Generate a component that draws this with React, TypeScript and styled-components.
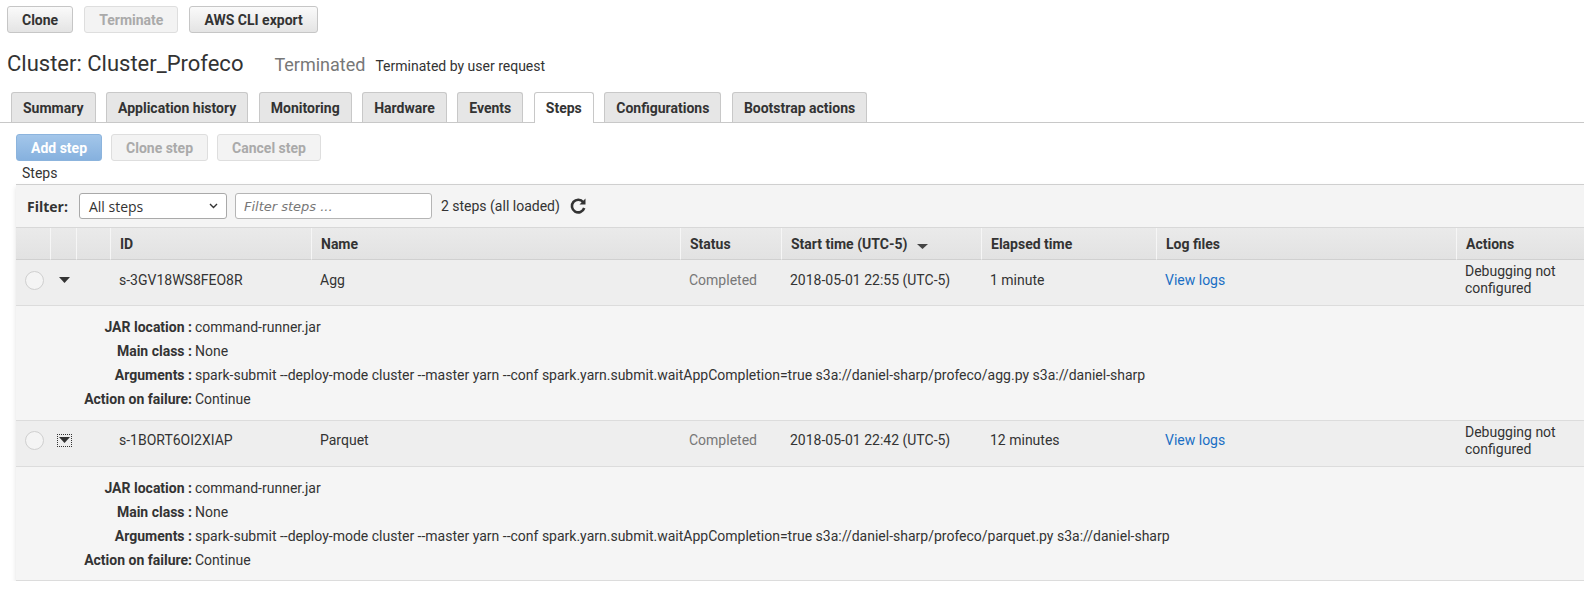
import React from "react";
import styled, { createGlobalStyle, css } from "styled-components";

const GlobalStyle = createGlobalStyle`
  body {
    margin: 0;
    background: #fff;
    font-family: Roboto, "Liberation Sans", Arial, sans-serif;
    font-size: 14px;
    color: #333;
  }
`;

const Page = styled.div`
  padding: 6px 0 0 0;
  width: 1584px;
  overflow: hidden;
`;

const Toolbar = styled.div`
  display: flex;
  gap: 11px;
  padding-left: 7px;
`;

const Btn = styled.button<{ $disabled?: boolean; $primary?: boolean }>`
  height: 27px;
  padding: 0 14px;
  border: 1px solid #c6c6c6;
  border-radius: 3px;
  background: linear-gradient(#fafafa, #e4e4e4);
  font-family: Roboto, "Liberation Sans", sans-serif;
  font-weight: bold;
  font-size: 14px;
  color: #333;
  ${(p) =>
    p.$disabled &&
    css`
      color: #aaa;
      border-color: #dedede;
      background: #f3f3f3;
    `}
  ${(p) =>
    p.$primary &&
    css`
      color: #fff;
      border-color: #8cb4dd;
      background: linear-gradient(#a3c6ea, #86b1de);
    `}
`;

const TitleRow = styled.div`
  display: flex;
  align-items: baseline;
  padding: 18px 0 0 7px;
  height: 33px;
`;

const Title = styled.h1`
  margin: 0;
  font-size: 22px;
  font-weight: normal;
  color: #333;
`;

const StateText = styled.span`
  font-size: 18px;
  color: #777;
  margin-left: 31px;
`;

const StateReason = styled.span`
  font-size: 14px;
  color: #333;
  margin-left: 10px;
`;

const Tabs = styled.div`
  display: flex;
  gap: 10.5px;
  padding-left: 11px;
  margin-top: 8px;
  border-bottom: 1px solid #c8c8c8;
`;

const Tab = styled.div<{ $active?: boolean }>`
  padding: 0 11px;
  display: flex;
  align-items: center;
  border: 1px solid #c8c8c8;
  border-bottom: none;
  border-radius: 3px 3px 0 0;
  background: ${(p) => (p.$active ? "#fff" : "#e6e6e6")};
  font-weight: bold;
  font-size: 14px;
  color: #333;
  margin-bottom: ${(p) => (p.$active ? "-1px" : "0")};
  height: ${(p) => (p.$active ? "30px" : "29px")};
`;

const StepActions = styled(Toolbar)`
  padding-left: 16px;
  margin-top: 11px;
  gap: 9px;
`;

const SectionLabel = styled.div`
  padding: 4px 0 0 22px;
  font-size: 14px;
  color: #333;
  height: 19px;
`;

const Panel = styled.div`
  margin-left: 16px;
  border-top: 1px solid #cfcfcf;
  box-shadow: 0 3px 5px rgba(0, 0, 0, 0.12);
`;

const FilterBar = styled.div`
  display: flex;
  align-items: center;
  height: 42px;
  padding-left: 11px;
  background: #f4f4f4;
  border-bottom: 1px solid #d8d8d8;
  font-family: "Open Sans", Roboto, sans-serif;
`;

const FilterLabel = styled.span`
  font-weight: bold;
  margin-right: 11px;
  font-size: 14px;
`;

const Select = styled.div`
  width: 148px;
  height: 26px;
  box-sizing: border-box;
  border: 1px solid #a9a9a9;
  border-radius: 3px;
  background: #fff;
  display: flex;
  align-items: center;
  justify-content: space-between;
  padding: 0 8px 0 9px;
  font-size: 14px;
  color: #333;
`;

const FilterInput = styled.div`
  width: 197px;
  height: 26px;
  box-sizing: border-box;
  border: 1px solid #b5b5b5;
  border-radius: 3px;
  background: #fff;
  margin-left: 8px;
  display: flex;
  align-items: center;
  padding-left: 8px;
  font-style: italic;
  color: #777;
  font-family: "DejaVu Sans", sans-serif;
  font-size: 13px;
`;

const Count = styled.span`
  margin-left: 9px;
  color: #333;
  font-family: Roboto, sans-serif;
  font-size: 14px;
`;

const Refresh = styled.span`
  margin-left: 9px;
  display: inline-flex;
`;

const Grid = styled.div`
  display: grid;
  grid-template-columns: 34px 26px 34px 201px 369px 101px 200px 175px 300px 1fr;
`;

const HeadCell = styled.div`
  height: 31px;
  display: flex;
  align-items: center;
  padding-left: 9px;
  background: linear-gradient(#eaeaea, #e2e2e2);
  border-left: 1px solid #f6f6f6;
  border-bottom: 1px solid #d0d0d0;
  font-weight: bold;
  color: #333;
  &:first-child {
    border-left: none;
  }
`;

const Cell = styled.div<{ $muted?: boolean; $link?: boolean }>`
  box-sizing: border-box;
  height: 46px;
  display: flex;
  align-items: center;
  padding: 0 0 5px 9px;
  background: #eeeeee;
  border-bottom: 1px solid #dcdcdc;
  color: ${(p) => (p.$muted ? "#777" : p.$link ? "#1a6fc4" : "#333")};
  line-height: 17px;
`;

const Detail = styled.div`
  grid-column: 1 / -1;
  background: #f5f5f5;
  border-bottom: 1px solid #dcdcdc;
  padding: 13px 0 11px 0;
  display: grid;
  grid-template-columns: 176px 1fr;
  row-gap: 6.5px;
  column-gap: 3px;
  line-height: 17.5px;
`;

const DLabel = styled.div`
  text-align: right;
  font-weight: bold;
`;

const Radio = styled.span`
  width: 17px;
  height: 17px;
  border: 1px solid #cfcfcf;
  border-radius: 50%;
  background: #f4f4f4;
`;

const Caret = styled.span<{ $focus?: boolean }>`
  display: inline-flex;
  padding: 2px 1px;
  outline: ${(p) => (p.$focus ? "1px dotted #333" : "none")};
  margin-left: -1px;
`;

const tabs = [
  "Summary",
  "Application history",
  "Monitoring",
  "Hardware",
  "Events",
  "Steps",
  "Configurations",
  "Bootstrap actions",
];

const steps = [
  {
    id: "s-3GV18WS8FEO8R",
    name: "Agg",
    start: "2018-05-01 22:55 (UTC-5)",
    elapsed: "1 minute",
    script: "agg.py",
  },
  {
    id: "s-1BORT6OI2XIAP",
    name: "Parquet",
    start: "2018-05-01 22:42 (UTC-5)",
    elapsed: "12 minutes",
    script: "parquet.py",
    focus: true,
  },
];

const CaretIcon = () => (
  <svg width="11" height="7" viewBox="0 0 11 7">
    <path d="M0 0h11L5.5 6z" fill="#333" />
  </svg>
);

export default function App() {
  return (
    <Page>
      <GlobalStyle />
      <Toolbar>
        <Btn>Clone</Btn>
        <Btn $disabled>Terminate</Btn>
        <Btn>AWS CLI export</Btn>
      </Toolbar>
      <TitleRow>
        <Title>Cluster: Cluster_Profeco</Title>
        <StateText>Terminated</StateText>
        <StateReason>Terminated by user request</StateReason>
      </TitleRow>
      <Tabs>
        {tabs.map((t) => (
          <Tab key={t} $active={t === "Steps"}>
            {t}
          </Tab>
        ))}
      </Tabs>
      <StepActions>
        <Btn $primary>Add step</Btn>
        <Btn $disabled>Clone step</Btn>
        <Btn $disabled>Cancel step</Btn>
      </StepActions>
      <SectionLabel>Steps</SectionLabel>
      <Panel>
        <FilterBar>
          <FilterLabel>Filter:</FilterLabel>
          <Select>
            All steps
            <svg width="9" height="6" viewBox="0 0 9 6">
              <path d="M1 1l3.5 3.5L8 1" stroke="#333" strokeWidth="1.4" fill="none" />
            </svg>
          </Select>
          <FilterInput>Filter steps ...</FilterInput>
          <Count>2 steps (all loaded)</Count>
          <Refresh>
            <svg width="18" height="18" viewBox="0 0 18 18">
              <path
                d="M14.2 5.2A6.3 6.3 0 1 0 15.2 11"
                stroke="#333"
                strokeWidth="2.6"
                fill="none"
              />
              <path d="M16.5 1.5v6h-6z" fill="#333" />
            </svg>
          </Refresh>
        </FilterBar>
        <Grid>
          <HeadCell />
          <HeadCell />
          <HeadCell />
          <HeadCell>ID</HeadCell>
          <HeadCell>Name</HeadCell>
          <HeadCell>Status</HeadCell>
          <HeadCell>
            Start time (UTC-5)
            <svg width="12" height="12" viewBox="0 0 12 12" style={{ marginLeft: 10, marginTop: 4 }}>
              <path d="M0 4h11L5.5 9z" fill="#444" />
            </svg>
          </HeadCell>
          <HeadCell>Elapsed time</HeadCell>
          <HeadCell>Log files</HeadCell>
          <HeadCell>Actions</HeadCell>
          {steps.map((s) => (
            <React.Fragment key={s.id}>
              <Cell>
                <Radio />
              </Cell>
              <Cell>
                <Caret $focus={s.focus}>
                  <CaretIcon />
                </Caret>
              </Cell>
              <Cell />
              <Cell>{s.id}</Cell>
              <Cell>{s.name}</Cell>
              <Cell $muted>Completed</Cell>
              <Cell>{s.start}</Cell>
              <Cell>{s.elapsed}</Cell>
              <Cell $link>View logs</Cell>
              <Cell>
                Debugging not
                <br />
                configured
              </Cell>
              <Detail>
                <DLabel>JAR location :</DLabel>
                <div>command-runner.jar</div>
                <DLabel>Main class :</DLabel>
                <div>None</div>
                <DLabel>Arguments :</DLabel>
                <div>
                  spark-submit --deploy-mode cluster --master yarn --conf
                  spark.yarn.submit.waitAppCompletion=true s3a://daniel-sharp/profeco/
                  {s.script} s3a://daniel-sharp
                </div>
                <DLabel>Action on failure:</DLabel>
                <div>Continue</div>
              </Detail>
            </React.Fragment>
          ))}
        </Grid>
      </Panel>
    </Page>
  );
}
